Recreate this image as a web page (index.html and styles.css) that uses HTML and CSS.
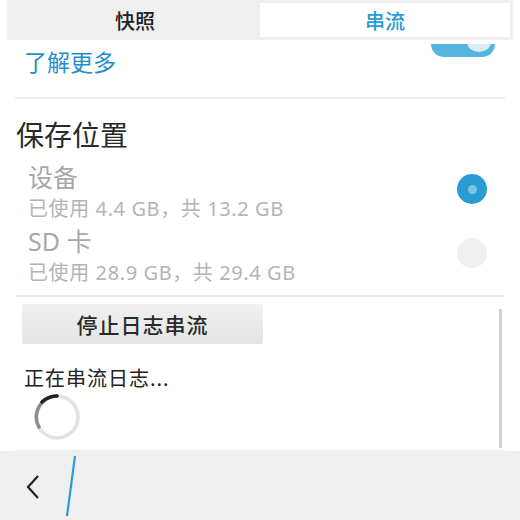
FILE: index.html
```html
<!DOCTYPE html>
<html lang="zh">
<head>
<meta charset="utf-8">
<link rel="stylesheet" href="styles.css">
</head>
<body>
<div class="screen">
  <div class="tabs">
    <div class="tab">快照</div>
    <div class="tab active">串流</div>
  </div>
  <div class="content">
    <div class="intro">
      <a class="link">了解更多</a>
      <span class="toggle"><span class="knob"></span></span>
    </div>
    <div class="section">
      <h2 class="section-title">保存位置</h2>
      <div class="options">
        <div class="option">
          <div class="option-text">
            <div class="option-name">设备</div>
            <div class="option-sub">已使用 4.4 GB，共 13.2 GB</div>
          </div>
          <span class="radio checked"><span class="dot"></span></span>
        </div>
        <div class="option">
          <div class="option-text">
            <div class="option-name">SD 卡</div>
            <div class="option-sub">已使用 28.9 GB，共 29.4 GB</div>
          </div>
          <span class="radio"></span>
        </div>
      </div>
    </div>
    <div class="log">
      <div class="log-main">
        <button class="btn">停止日志串流</button>
        <div class="status">正在串流日志...</div>
        <svg class="spinner" width="50" height="50" viewBox="0 0 50 50">
          <circle cx="25" cy="25" r="21" fill="none" stroke="#e2e2e2" stroke-width="3.5"/>
          <path d="M25 4 A21 21 0 0 0 7 35" fill="none" stroke="#777" stroke-width="3.5" stroke-linecap="round" opacity="0.8"/>
          <path d="M25 4 A21 21 0 0 0 10 10" fill="none" stroke="#222" stroke-width="3.5" stroke-linecap="round"/>
        </svg>
      </div>
      <div class="scrollbar"></div>
    </div>
  </div>
  <div class="bottombar">
    <svg class="back" width="20" height="30" viewBox="0 0 20 30">
      <path d="M14 4 L4 15 L14 26" fill="none" stroke="#222" stroke-width="2.2"/>
    </svg>
    <svg class="caret" width="16" height="62" viewBox="0 0 16 62">
      <path d="M11 1 L3 61" stroke="#2a9bd6" stroke-width="2.2"/>
    </svg>
  </div>
</div>
</body>
</html>
```

FILE: styles.css
```css
html, body {
  margin: 0;
  padding: 0;
  background: #fff;
}
body {
  font-family: "Noto Sans", "Noto Sans CJK SC", sans-serif;
}
.screen {
  width: 520px;
  height: 520px;
  overflow: hidden;
  display: flex;
  flex-direction: column;
}
.tabs {
  height: 40px;
  margin: 0 7px 4px;
  padding: 3px;
  box-sizing: border-box;
  background: #efefef;
  display: grid;
  grid-template-columns: 250px 1fr;
  flex: none;
}
.tab {
  display: flex;
  align-items: center;
  justify-content: center;
  font-size: 20px;
  color: #222;
  font-family: "Noto Sans CJK SC", sans-serif;
  font-weight: 500;
}
.tab.active {
  background: #fff;
  color: #2a9bd6;
}
.content {
  height: 407px;
  flex: none;
  overflow: hidden;
  display: flex;
  flex-direction: column;
}
.intro {
  margin: -13px 15px 0;
  padding: 0 10px 0 9px;
  display: flex;
  justify-content: space-between;
  align-items: flex-start;
  border-bottom: 2px solid #ececec;
  height: 66px;
  flex: none;
}
.link {
  margin-top: 15px;
  font-size: 23px;
  line-height: 30px;
  color: #1f8fd0;
  font-family: "Noto Sans CJK SC", sans-serif;
}
.toggle {
  width: 64px;
  height: 26px;
  border-radius: 13px;
  background: #56b5df;
  position: relative;
}
.knob {
  position: absolute;
  right: 4px;
  top: 1px;
  width: 24px;
  height: 20px;
  border-radius: 50%;
  background: #d9eef8;
}
.section {
  margin: 0 15px;
  border-bottom: 2px solid #ececec;
  height: 198px;
  box-sizing: border-box;
  flex: none;
}
.section-title {
  margin: 17px 0 0 1px;
  font-size: 28px;
  line-height: 36px;
  font-weight: 400;
  color: #2a2a2a;
  font-family: "Noto Sans CJK SC", sans-serif;
}
.options {
  margin-top: 9px;
}
.option {
  display: flex;
  align-items: center;
  justify-content: space-between;
  padding: 0 18px 0 13px;
}
.option-name {
  font-size: 25px;
  line-height: 32px;
  color: #a8a8a8;
  font-family: "Noto Sans", "Noto Sans CJK SC", sans-serif;
}
.option-sub {
  font-size: 20px;
  line-height: 32px;
  letter-spacing: 0.6px;
  color: #b4b4b4;
  font-family: "Noto Sans", "Noto Sans CJK SC", sans-serif;
}
.radio {
  width: 30px;
  height: 30px;
  border-radius: 50%;
  background: #efefef;
  display: flex;
  align-items: center;
  justify-content: center;
  margin-bottom: 8px;
}
.radio.checked {
  background: #2b9bd4;
}
.dot {
  width: 9px;
  height: 9px;
  border-radius: 50%;
  background: #7bc2e7;
}
.log {
  margin: 0 15px;
  display: flex;
  justify-content: space-between;
  flex: 1;
  border-bottom: 1px solid #ececec;
}
.log-main {
  padding: 7px 0 0 7px;
  display: flex;
  flex-direction: column;
  align-items: flex-start;
}
.btn {
  width: 241px;
  height: 40px;
  border: none;
  border-radius: 2px;
  background: linear-gradient(#f0f0f0, #e5e5e5);
  font-family: "Noto Sans CJK SC", sans-serif;
  font-size: 21px;
  font-weight: 500;
  color: #2a2a2a;
  letter-spacing: 1px;
  padding: 0;
}
.status {
  margin: 20px 0 0 2px;
  font-size: 20px;
  line-height: 28px;
  letter-spacing: 1px;
  color: #222;
  font-family: "Noto Sans CJK SC", sans-serif;
}
.spinner {
  margin: 0 0 0 10px;
}
.scrollbar {
  width: 3px;
  background: #d0d0d0;
  margin: 12px 3px 2px 0;
}
.bottombar {
  flex: 1;
  background: #efefef;
  display: flex;
  align-items: center;
  padding-left: 24px;
  gap: 20px;
}
.back {
  margin-top: 2px;
}
```
